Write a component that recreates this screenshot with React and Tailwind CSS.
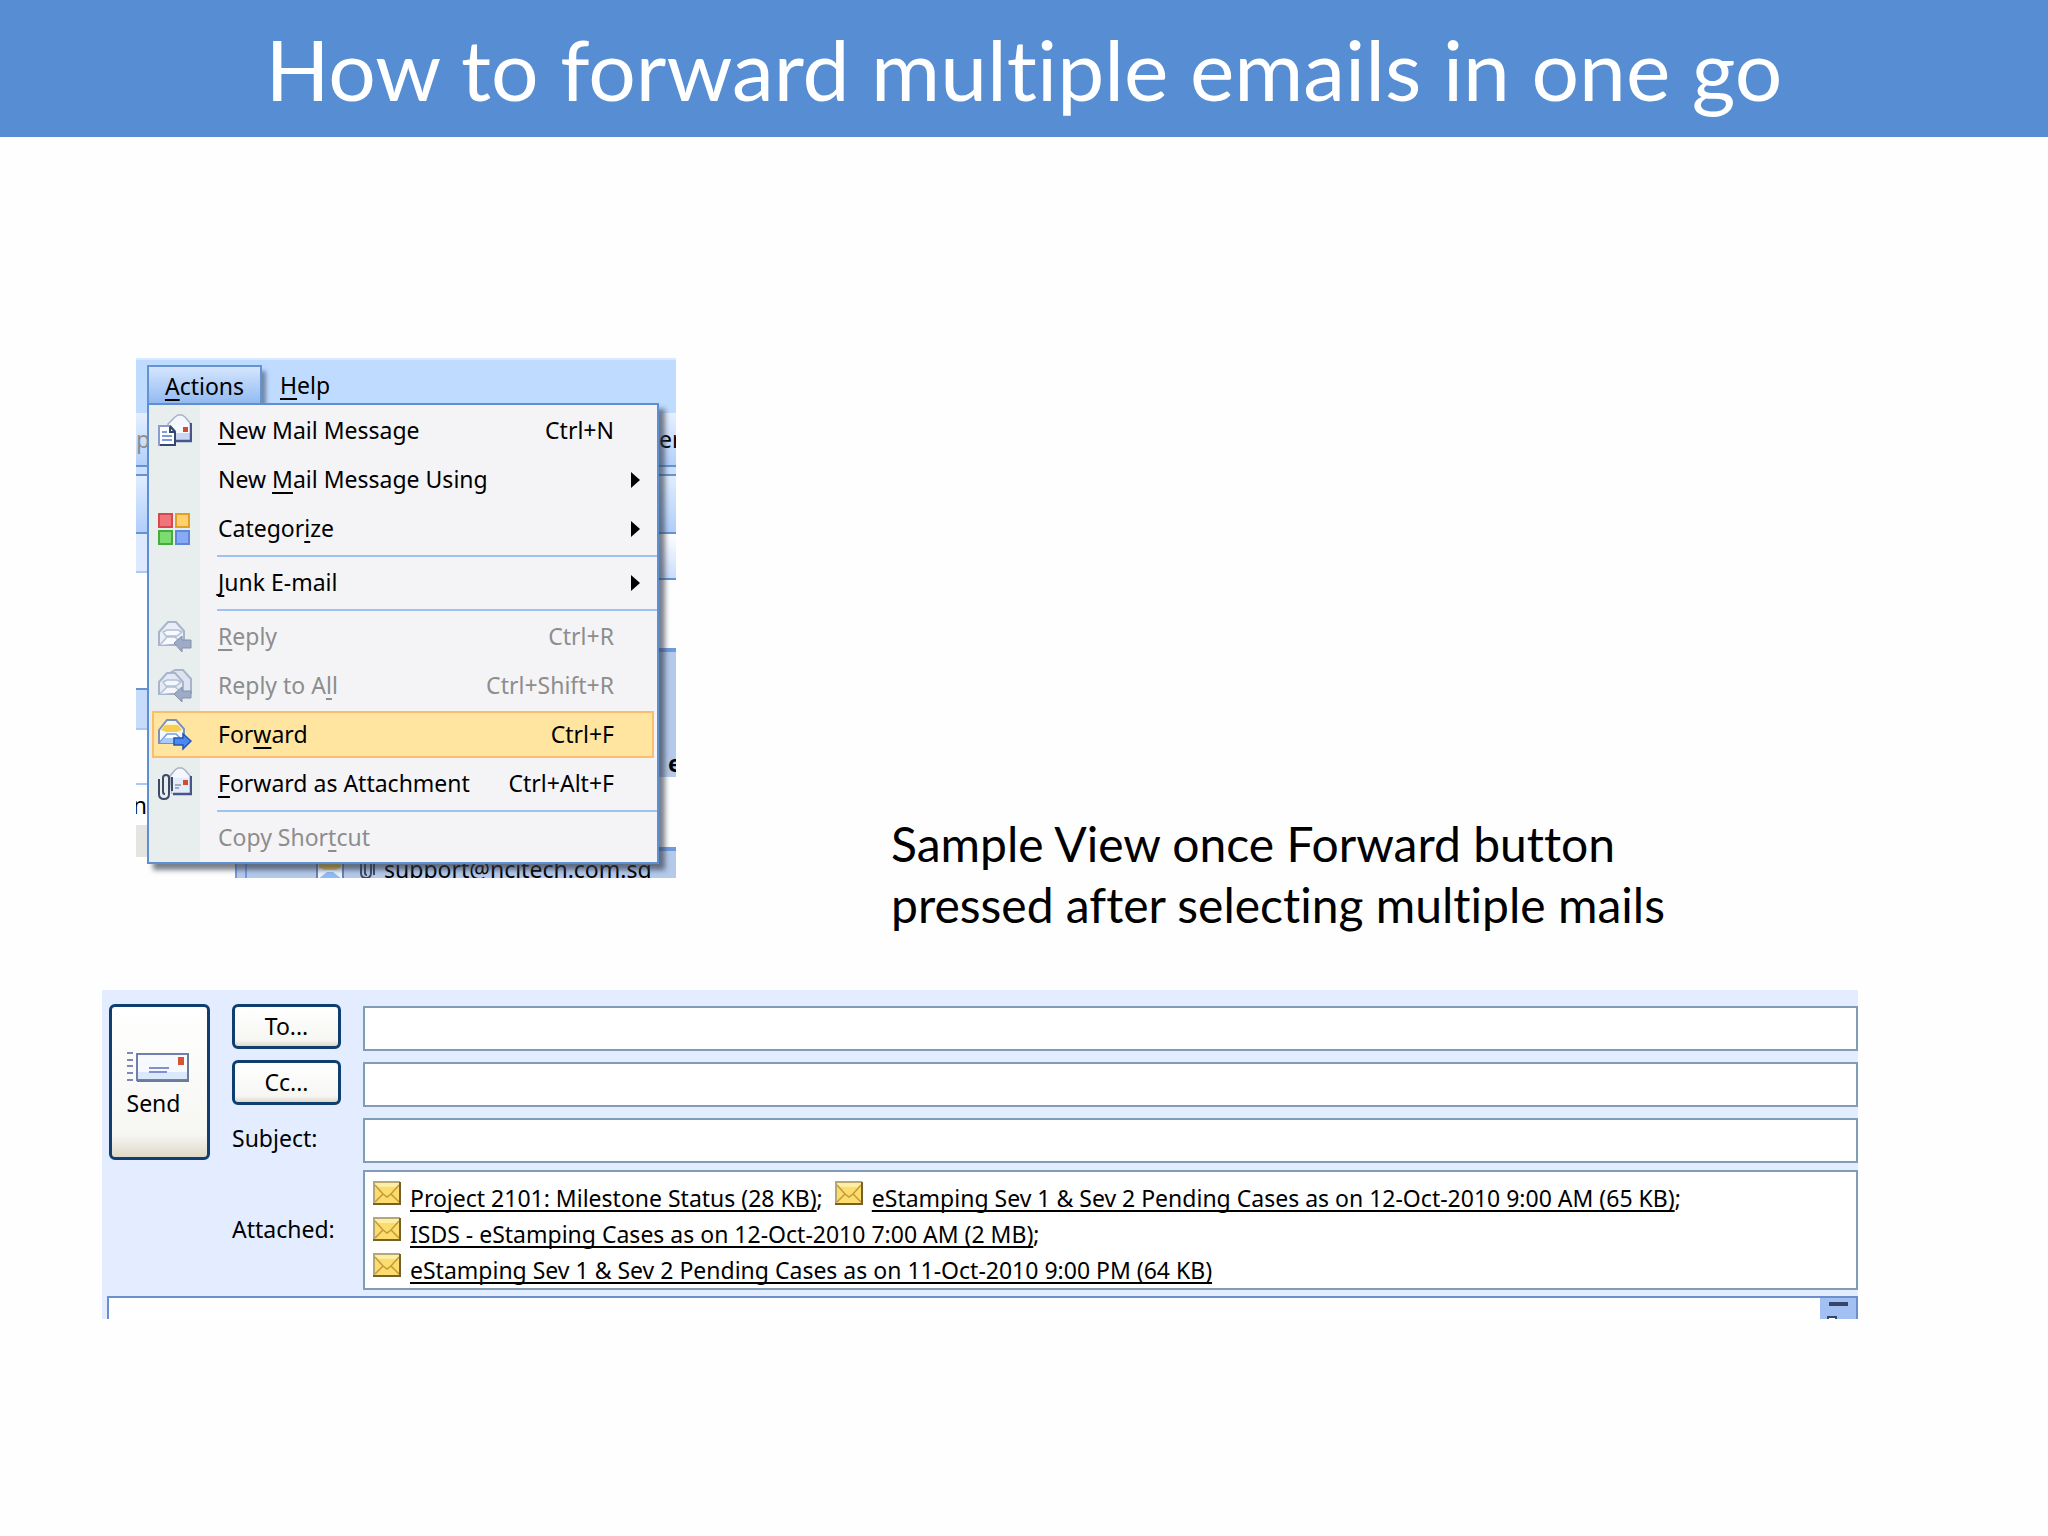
const MENU_ITEMS = [
  { label: ["", "N", "ew Mail Message"], shortcut: "Ctrl+N", icon: NewMailIcon },
  { label: ["New ", "M", "ail Message Using"], submenu: true },
  { label: ["Categor", "i", "ze"], submenu: true, icon: CategorizeIcon },
  { separator: true },
  { label: ["", "J", "unk E-mail"], submenu: true },
  { separator: true },
  { label: ["", "R", "eply"], shortcut: "Ctrl+R", icon: ReplyIcon, disabled: true },
  { label: ["Reply to A", "l", "l"], shortcut: "Ctrl+Shift+R", icon: ReplyAllIcon, disabled: true },
  { label: ["For", "w", "ard"], shortcut: "Ctrl+F", icon: ForwardIcon, active: true },
  { label: ["", "F", "orward as Attachment"], shortcut: "Ctrl+Alt+F", icon: AttachmentIcon },
  { separator: true },
  { label: ["Copy Shor", "t", "cut"], disabled: true },
];

const ATTACHMENTS = [
  [
    "Project 2101: Milestone Status (28 KB)",
    "eStamping Sev 1 & Sev 2 Pending Cases as on 12-Oct-2010 9:00 AM (65 KB)",
  ],
  ["ISDS - eStamping Cases as on 12-Oct-2010 7:00 AM (2 MB)"],
  ["eStamping Sev 1 & Sev 2 Pending Cases as on 11-Oct-2010 9:00 PM (64 KB)"],
];

function NewMailIcon() {
  return (
    <svg viewBox="0 0 34 34" className="h-[34px] w-[34px]">
      <path d="M10 10 17 3l3-2h4l3 2 6 7v17H12z" fill="#f4f7fd" stroke="#a9b0c2" strokeWidth="1.5" />
      <path d="M12 11h21v8H12z" fill="#f8faff" />
      <path d="M12 19h21v8H12z" fill="#c9d7f3" />
      <path d="M33 9v18H16" fill="none" stroke="#46558a" strokeWidth="2.5" />
      <rect x="25" y="13" width="5" height="5" fill="#d8492c" />
      <path d="M1 12h11l5 5v14H1z" fill="#fff" stroke="#8b9bce" strokeWidth="2" />
      <path d="M12 12l5 6v13H2" fill="none" stroke="#35466f" strokeWidth="2" />
      <path d="M12 13v5h5" fill="none" stroke="#35466f" strokeWidth="2" />
      <path d="M4 18h5M4 22h10M4 26h10" stroke="#7d99d8" strokeWidth="2" />
    </svg>
  );
}

function CategorizeIcon() {
  return (
    <svg viewBox="0 0 34 34" className="h-[34px] w-[34px]">
      <rect x="1" y="2" width="13" height="13" fill="#f0757a" stroke="#d9474c" strokeWidth="2" />
      <rect x="18" y="2" width="13" height="13" fill="#ffd071" stroke="#e3a01f" strokeWidth="2" />
      <rect x="1" y="19" width="13" height="13" fill="#7ddc70" stroke="#45ad3c" strokeWidth="2" />
      <rect x="18" y="19" width="13" height="13" fill="#86aaf3" stroke="#5f87d9" strokeWidth="2" />
    </svg>
  );
}

function ReplyIcon() {
  return (
    <svg viewBox="0 0 34 34" className="h-[34px] w-[34px]">
      <path d="M1 12 10 2h8l8 9v14H1z" fill="#e9eff8" stroke="#a7b4ca" strokeWidth="2" />
      <path d="M5 12l4-2h11l4 2-5 4H8zM2 25l7-8h8l6 6" fill="#f8fafd" stroke="#b3c0d6" strokeWidth="1.5" />
      <path d="M16 23l8-7v4h9v8h-9v4z" fill="#9dabc4" stroke="#8392ad" strokeWidth="1" />
    </svg>
  );
}

function ReplyAllIcon() {
  return (
    <svg viewBox="0 0 34 34" className="h-[34px] w-[34px]">
      <path d="M12 4l5-3h8l8 9v14H20" fill="#dde4f1" stroke="#a7b4ca" strokeWidth="2" />
      <path d="M1 13 9 4h8l8 9v12H1z" fill="#e4eaf5" stroke="#a7b4ca" strokeWidth="2" />
      <path d="M5 13l4-2h10l4 2-5 4H8zM2 25l7-7h8l6 5" fill="#f4f7fb" stroke="#b3c0d6" strokeWidth="1.5" />
      <path d="M16 25l8-7v4h9v7h-9v4z" fill="#9dabc4" stroke="#8392ad" strokeWidth="1" />
    </svg>
  );
}

function ForwardIcon() {
  return (
    <svg viewBox="0 0 34 34" className="h-[34px] w-[34px]">
      <path d="M1 12 9 2h9l8 9v14H1z" fill="#f3f8ff" stroke="#7f8fb8" strokeWidth="2" />
      <path d="M3 12l4-5h13l4 5-5 2H8z" fill="#f8cf4c" />
      <path d="M8 6h11" stroke="#fff3c2" strokeWidth="2" />
      <path d="M2 24 9 16h9l6 6" fill="#fff" stroke="#7a9ade" strokeWidth="1.5" />
      <path d="M2 25h15v-5H6z" fill="#a9cbfb" />
      <path d="M16 20h9v-4l8 7-8 8v-4h-9z" fill="#4a8af0" stroke="#2555b4" strokeWidth="1.5" />
    </svg>
  );
}

function AttachmentIcon() {
  return (
    <svg viewBox="0 0 34 34" className="h-[34px] w-[34px]">
      <path d="M12 9l5-6 3-2h4l3 2 6 7v16H14z" fill="#f4f7fd" stroke="#a9b0c2" strokeWidth="1.5" />
      <path d="M14 11h19v15H14z" fill="#e4ebf9" />
      <path d="M33 9v18H15" fill="none" stroke="#46558a" strokeWidth="2.5" />
      <rect x="25" y="13" width="5" height="5" fill="#d8492c" />
      <path d="M17 18h6M17 21h4" stroke="#8a94a8" strokeWidth="1.5" />
      <path d="M1 12v15q0 5 5 5t5-5V11q0-3-3-3T5 11v14q0 2 2 2" fill="none" stroke="#3d4a66" strokeWidth="2" />
      <path d="M14 10v14" stroke="#3d4a66" strokeWidth="2" />
    </svg>
  );
}

function SendIcon() {
  return (
    <svg viewBox="0 0 62 30" className="h-[30px] w-[62px]">
      <path d="M0 1h6M0 8h6M0 14h6M0 21h6M0 28h6" stroke="#8088b4" strokeWidth="2" />
      <path d="M10 2h51v26H10z" fill="#f6f9ff" stroke="#6f80b0" strokeWidth="2" />
      <path d="M11 20h49v7H11z" fill="#dce8fb" />
      <path d="M61 2v27H10" fill="none" stroke="#6b7b9c" strokeWidth="2" />
      <path d="M22 16h20M22 20h18" stroke="#7f92cc" strokeWidth="2" />
      <rect x="51" y="5" width="6" height="8" fill="#d9532f" />
    </svg>
  );
}

function EnvelopeIcon() {
  return (
    <svg viewBox="0 0 28 24" className="h-6 w-7 shrink-0">
      <rect x="1" y="1" width="26" height="22" fill="#fbdc6c" />
      <path d="M1 1h26v5H1z" fill="#fdeea4" />
      <path d="M2 4l8 9 4 3 4-3 8-9M2 21l8-8M26 21l-8-8" fill="none" stroke="#c39a3a" strokeWidth="1.5" />
      <path d="M1 23V1h26" fill="none" stroke="#b5a874" strokeWidth="2" />
      <path d="M0 23h27V1" fill="none" stroke="#77602a" strokeWidth="2" />
    </svg>
  );
}

function MenuItem({ item }) {
  const [before, key, after] = item.label;
  const Icon = item.icon;

  return (
    <button
      type="button"
      role="menuitem"
      disabled={item.disabled}
      className={`mx-[3px] my-px flex h-[47px] items-center border-2 pl-1 text-left ${
        item.active ? "border-[#fbbd6b] bg-[#ffe5a0]" : "border-transparent"
      } ${item.disabled ? "text-[#8d8d8d]" : "text-black"}`}
    >
      <span className="mr-[26px] w-[34px]">{Icon ? <Icon /> : null}</span>
      <span className="whitespace-nowrap">
        {before}
        <span className="underline decoration-2 underline-offset-4">{key}</span>
        {after}
      </span>
      {item.shortcut ? <span className="mr-[38px] ml-auto whitespace-nowrap">{item.shortcut}</span> : null}
      {item.submenu ? (
        <svg viewBox="0 0 9 16" className="mr-3 ml-auto h-4 w-[9px]">
          <path d="M0 0l9 8-9 8z" fill="#000" />
        </svg>
      ) : null}
    </button>
  );
}

// The slice of the mail window that shows around the open menu.
function WindowBackdrop() {
  return (
    <div className="absolute inset-0 flex flex-col overflow-hidden">
      <div className="h-[55px] shrink-0 border-t-2 border-[#dbe9ff] bg-[#bfdbff]" />
      <div className="flex h-[54px] shrink-0 items-center justify-between border-b-2 border-[#6593cf] bg-linear-to-b from-[#e6f0ff] to-[#b3d0fb]">
        <span className="w-[11px] overflow-hidden text-[#8d8d8d]">p</span>
        <span className="w-[17px] overflow-hidden">er</span>
      </div>
      <div className="h-[9px] shrink-0 border-b-2 border-[#6593cf] bg-[#cbe0ff]" />
      <div className="h-[58px] shrink-0 border-b-2 border-[#6593cf] bg-linear-to-b from-[#e0edff] to-[#b0cefa]" />
      <div className="flex grow justify-between">
        <div className="w-[11px]">
          <div className="h-[39px] border-b-2 border-[#a9c8f5] bg-[#dde9ff]" />
          <div className="h-[117px] border-b-2 border-[#6593cf]" />
          <div className="h-10 border-b-2 border-[#a9c8f5] bg-[#c7dcfb]" />
          <div className="h-[55px] border-b-2 border-[#a9c8f5]" />
          <div className="flex h-10 justify-end overflow-hidden leading-10">n</div>
          <div className="h-8 bg-[#e4e4e0]" />
        </div>
        <div className="flex w-[441px] flex-col">
          <div className="h-[46px] border-b-2 border-[#6593cf] bg-linear-to-b from-white to-[#cadcfb]" />
          <div className="h-[68px]" />
          <div className="flex h-[129px] items-end justify-end border-t-4 border-[#6f9ade] bg-[#b5c9ea]">
            <span className="w-2 overflow-hidden leading-7 font-bold">e</span>
          </div>
          <div className="h-[70px]" />
          <div className="flex h-8 items-end overflow-hidden border-t-4 border-l-2 border-[#6f9ade] bg-[#b5c9ea]">
            <span className="h-full w-2.5 border-r-2 border-[#6f9ade]" />
            <svg viewBox="0 0 28 16" className="ml-[69px] h-4 w-7">
              <path d="M1 0h26v16H1z" fill="#eaf3ff" stroke="#6d80b2" strokeWidth="2" />
              <path d="M3 0h22v4l-5 3H8L3 4z" fill="#f3c94f" />
              <path d="M2 16l9-7h6l9 7z" fill="#8fbcf8" />
            </svg>
            <svg viewBox="0 0 16 16" className="ml-4 h-4 w-4">
              <path d="M1 0v10q0 5 5 5t5-5V0M5 0v10q0 2 2 2M14 0v12" fill="none" stroke="#3d4a66" strokeWidth="2" />
            </svg>
            <span className="ml-2 leading-5">support@ncitech.com.sg</span>
          </div>
        </div>
      </div>
    </div>
  );
}

function ActionsMenu() {
  return (
    <div className="relative w-[540px] shrink-0 pt-[7px] pb-3.5 pl-[11px]">
      <WindowBackdrop />
      <div className="relative z-10 -mb-0.5 flex h-10">
        <button
          type="button"
          className="w-[115px] border-2 border-b-0 border-[#6593cf] bg-linear-to-b from-[#d5e6fd] to-[#8fb8f0] shadow-[6px_4px_4px_-2px_rgba(60,80,110,0.6)]"
        >
          <span className="underline decoration-2 underline-offset-4">A</span>ctions
        </button>
        <button type="button" className="ml-[18px]">
          <span className="underline decoration-2 underline-offset-4">H</span>elp
        </button>
      </div>
      <div
        role="menu"
        className="relative z-10 flex w-[512px] flex-col border-2 border-[#5f8fd3] bg-[linear-gradient(to_right,#e8eeee_51px,#f4f4f7_51px)] pt-px shadow-[6px_6px_5px_rgba(50,60,75,0.65)]"
      >
        {MENU_ITEMS.map((item, i) =>
          item.separator ? (
            <div key={i} role="separator" className="ml-[68px] flex h-[5px] items-center">
              <div className="h-0.5 w-full bg-[#9cc3f3]" />
            </div>
          ) : (
            <MenuItem key={i} item={item} />
          ),
        )}
      </div>
    </div>
  );
}

const BUTTON =
  "rounded-md border-[3px] border-[#0f3f70] bg-linear-to-b from-white via-[#f6f6f3] via-85% to-[#dfd9c8]";
const FIELD = "h-[45px] w-full border-2 border-[#7f9db9] bg-white px-2 outline-none";

function ComposeForm() {
  return (
    <form className="mr-[190px] ml-[102px] bg-[#e3edff] pt-3.5">
      <div className="flex pl-[7px]">
        <button
          type="button"
          className={`${BUTTON} flex h-[156px] w-[101px] shrink-0 flex-col items-center justify-center pt-2 pr-1`}
        >
          <SendIcon />
          <span className="mt-1 mr-2">Send</span>
        </button>

        <div className="ml-[22px] grid grow grid-cols-[131px_1fr] items-center gap-y-[11px] pt-0.5">
          <button type="button" className={`${BUTTON} -mt-1 h-[45px] w-[109px]`}>
            To...
          </button>
          <input aria-label="To" type="text" className={FIELD} />
          <button type="button" className={`${BUTTON} -mt-1 h-[45px] w-[109px]`}>
            Cc...
          </button>
          <input aria-label="Cc" type="text" className={FIELD} />
          <label htmlFor="subject" className="-mt-1">
            Subject:
          </label>
          <input id="subject" type="text" className={FIELD} />

          <span id="attached" className="-mt-1.5">
            Attached:
          </span>
          <div
            aria-labelledby="attached"
            className="-mt-1 h-[120px] border-2 border-[#7f9db9] bg-white pt-2 pl-2"
          >
            {ATTACHMENTS.map((line, i) => (
              <div key={i} className="flex h-9 items-center">
                {line.map((name, j) => (
                  <span key={name} className="mr-3 flex whitespace-nowrap">
                    <EnvelopeIcon />
                    <a
                      href="#"
                      className="ml-[9px] underline decoration-2 underline-offset-[3px] [text-decoration-skip-ink:none]"
                    >
                      {name}
                    </a>
                    {i < 2 || j < line.length - 1 ? ";" : ""}
                  </span>
                ))}
              </div>
            ))}
          </div>
        </div>
      </div>

      <div className="mt-1.5 ml-[5px] flex h-[23px] justify-end border-t-2 border-l-2 border-[#6a8fcb] bg-white">
        <svg viewBox="0 0 38 21" className="h-[21px] w-[38px]">
          <path d="M0 0h38v21H0z" fill="#a3c0f2" />
          <path d="M37 0v21" stroke="#6a8fcb" strokeWidth="2" />
          <path d="M9 6h19" stroke="#34466f" strokeWidth="4" />
          <path d="M8 21v-2h8v2" fill="#fff" stroke="#34466f" strokeWidth="2" />
        </svg>
      </div>
    </form>
  );
}

export default function App() {
  return (
    <div className="min-h-screen bg-[#fefefe] font-['Noto_Sans',sans-serif] text-[23px] text-black">
      <header className="flex h-[137px] items-center justify-center bg-[#568dd3]">
        <h1 className="font-['Lato',sans-serif] text-[84px] text-white [font-variant-ligatures:none]">
          How to forward multiple emails in one go
        </h1>
      </header>

      <main className="pt-[221px]">
        <div className="flex items-start pl-[136px]">
          <ActionsMenu />
          <p className="mt-[455px] ml-[215px] font-['Lato',sans-serif] text-[48px] leading-[61px] [font-variant-ligatures:none]">
            Sample View once Forward button
            <br />
            pressed after selecting multiple mails
          </p>
        </div>
        <div className="mt-[55px]">
          <ComposeForm />
        </div>
      </main>
    </div>
  );
}
